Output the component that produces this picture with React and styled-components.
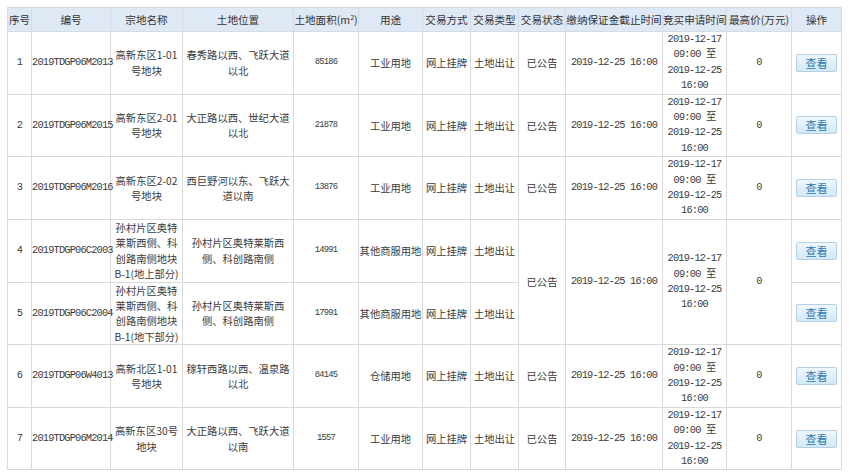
import React from 'react';
import styled, { createGlobalStyle } from 'styled-components';

const GlobalStyle = createGlobalStyle`
  html, body {
    margin: 0;
    padding: 0;
    background: #ffffff;
  }
  body {
    font-family: "Noto Sans CJK SC", "Liberation Sans", sans-serif;
    color: #3a3a3a;
  }
`;

const columns = [
  { title: '序号', width: 24 },
  { title: '编号', width: 79 },
  { title: '宗地名称', width: 72 },
  { title: '土地位置', width: 111 },
  { title: '土地面积(㎡)', width: 65 },
  { title: '用途', width: 64 },
  { title: '交易方式', width: 48 },
  { title: '交易类型', width: 48 },
  { title: '交易状态', width: 47 },
  { title: '缴纳保证金截止时间', width: 97 },
  { title: '竞买申请时间', width: 64 },
  { title: '最高价(万元)', width: 65 },
  { title: '操作', width: 50 },
];

const rows = [
  {
    no: 1, code: '2019TDGP06M2013',
    name: ['高新东区1-01', '号地块'],
    place: ['春秀路以西、飞跃大道', '以北'],
    area: '85186', use: '工业用地',
  },
  {
    no: 2, code: '2019TDGP06M2015',
    name: ['高新东区2-01', '号地块'],
    place: ['大正路以西、世纪大道', '以北'],
    area: '21878', use: '工业用地',
  },
  {
    no: 3, code: '2019TDGP06M2016',
    name: ['高新东区2-02', '号地块'],
    place: ['西巨野河以东、飞跃大', '道以南'],
    area: '13876', use: '工业用地',
  },
  {
    no: 4, code: '2019TDGP06C2003',
    name: ['孙村片区奥特', '莱斯西侧、科', '创路南侧地块', 'B-1(地上部分)'],
    place: ['孙村片区奥特莱斯西', '侧、科创路南侧'],
    area: '14991', use: '其他商服用地', span: 2,
  },
  {
    no: 5, code: '2019TDGP06C2004',
    name: ['孙村片区奥特', '莱斯西侧、科', '创路南侧地块', 'B-1(地下部分)'],
    place: ['孙村片区奥特莱斯西', '侧、科创路南侧'],
    area: '17991', use: '其他商服用地', span: 0,
  },
  {
    no: 6, code: '2019TDGP06W4013',
    name: ['高新北区1-01', '号地块'],
    place: ['稼轩西路以西、温泉路', '以北'],
    area: '84145', use: '仓储用地',
  },
  {
    no: 7, code: '2019TDGP06M2014',
    name: ['高新东区30号', '地块'],
    place: ['大正路以西、飞跃大道', '以南'],
    area: '1557', use: '工业用地',
  },
];

const Lines = ({ items }) =>
  items.map((line, i) => (
    <React.Fragment key={i}>
      {i > 0 && <br />}
      {line}
    </React.Fragment>
  ));

const Page = styled.div`
  padding: 7px 0 0 7px;
`;

const Grid = styled.table`
  border-collapse: collapse;
  table-layout: fixed;
  width: 834px;
  border: 1px solid #d6d6d6;
`;

const HeadRow = styled.tr`
  height: 24px;
  background: #dfe9f5;
`;

const HeadCell = styled.th`
  font-weight: normal;
  font-size: 10.6px;
  color: #333;
  padding: 0;
  white-space: nowrap;
  text-align: center;
  border: 1px solid #d3dbe4;
  overflow: visible;
`;

const Row = styled.tr`
  height: 62.6px;
`;

const Cell = styled.td`
  padding: 0;
  text-align: center;
  vertical-align: middle;
  white-space: nowrap;
  border: 1px solid #dadada;
  line-height: 15.4px;
  font-size: ${(p) => (p.$small ? '8.8px' : '10.3px')};
  font-family: ${(p) =>
    p.$mono
      ? '"Liberation Mono", "Noto Sans CJK SC", monospace'
      : '"Noto Sans CJK SC", "Liberation Sans", sans-serif'};
  letter-spacing: ${(p) => (p.$mono ? '-0.8px' : '0')};
  color: #3a3a3a;
`;

const ViewButton = styled.button`
  width: 41px;
  height: 18px;
  padding: 0;
  border: 1px solid #b5d0e4;
  border-radius: 2px;
  background: linear-gradient(#eef7fd, #d2e8f6);
  color: #2a78b4;
  font-family: "Noto Sans CJK SC", sans-serif;
  font-size: 11px;
  line-height: 16px;
  cursor: pointer;
`;

const Sup = styled.span`
  font-size: 7px;
  vertical-align: top;
`;

export default function App() {
  return (
    <Page>
      <GlobalStyle />
      <Grid>
        <colgroup>
          {columns.map((c) => (
            <col key={c.title} style={{ width: c.width }} />
          ))}
        </colgroup>
        <thead>
          <HeadRow>
            {columns.map((c) => (
              <HeadCell key={c.title}>
                {c.title === '土地面积(㎡)' ? (
                  <>土地面积(m<Sup>2</Sup>)</>
                ) : (
                  c.title
                )}
              </HeadCell>
            ))}
          </HeadRow>
        </thead>
        <tbody>
          {rows.map((r) => (
            <Row key={r.no}>
              <Cell $mono>{r.no}</Cell>
              <Cell $mono>{r.code}</Cell>
              <Cell><Lines items={r.name} /></Cell>
              <Cell><Lines items={r.place} /></Cell>
              <Cell $mono $small>{r.area}</Cell>
              <Cell>{r.use}</Cell>
              <Cell>网上挂牌</Cell>
              <Cell>土地出让</Cell>
              {r.span !== 0 && (
                <>
                  <Cell rowSpan={r.span || 1}>已公告</Cell>
                  <Cell $mono rowSpan={r.span || 1}>2019-12-25 16:00</Cell>
                  <Cell $mono rowSpan={r.span || 1}>
                    <Lines items={['2019-12-17', '09:00 至', '2019-12-25', '16:00']} />
                  </Cell>
                  <Cell $mono rowSpan={r.span || 1}>0</Cell>
                </>
              )}
              <Cell>
                <ViewButton>查看</ViewButton>
              </Cell>
            </Row>
          ))}
        </tbody>
      </Grid>
    </Page>
  );
}
